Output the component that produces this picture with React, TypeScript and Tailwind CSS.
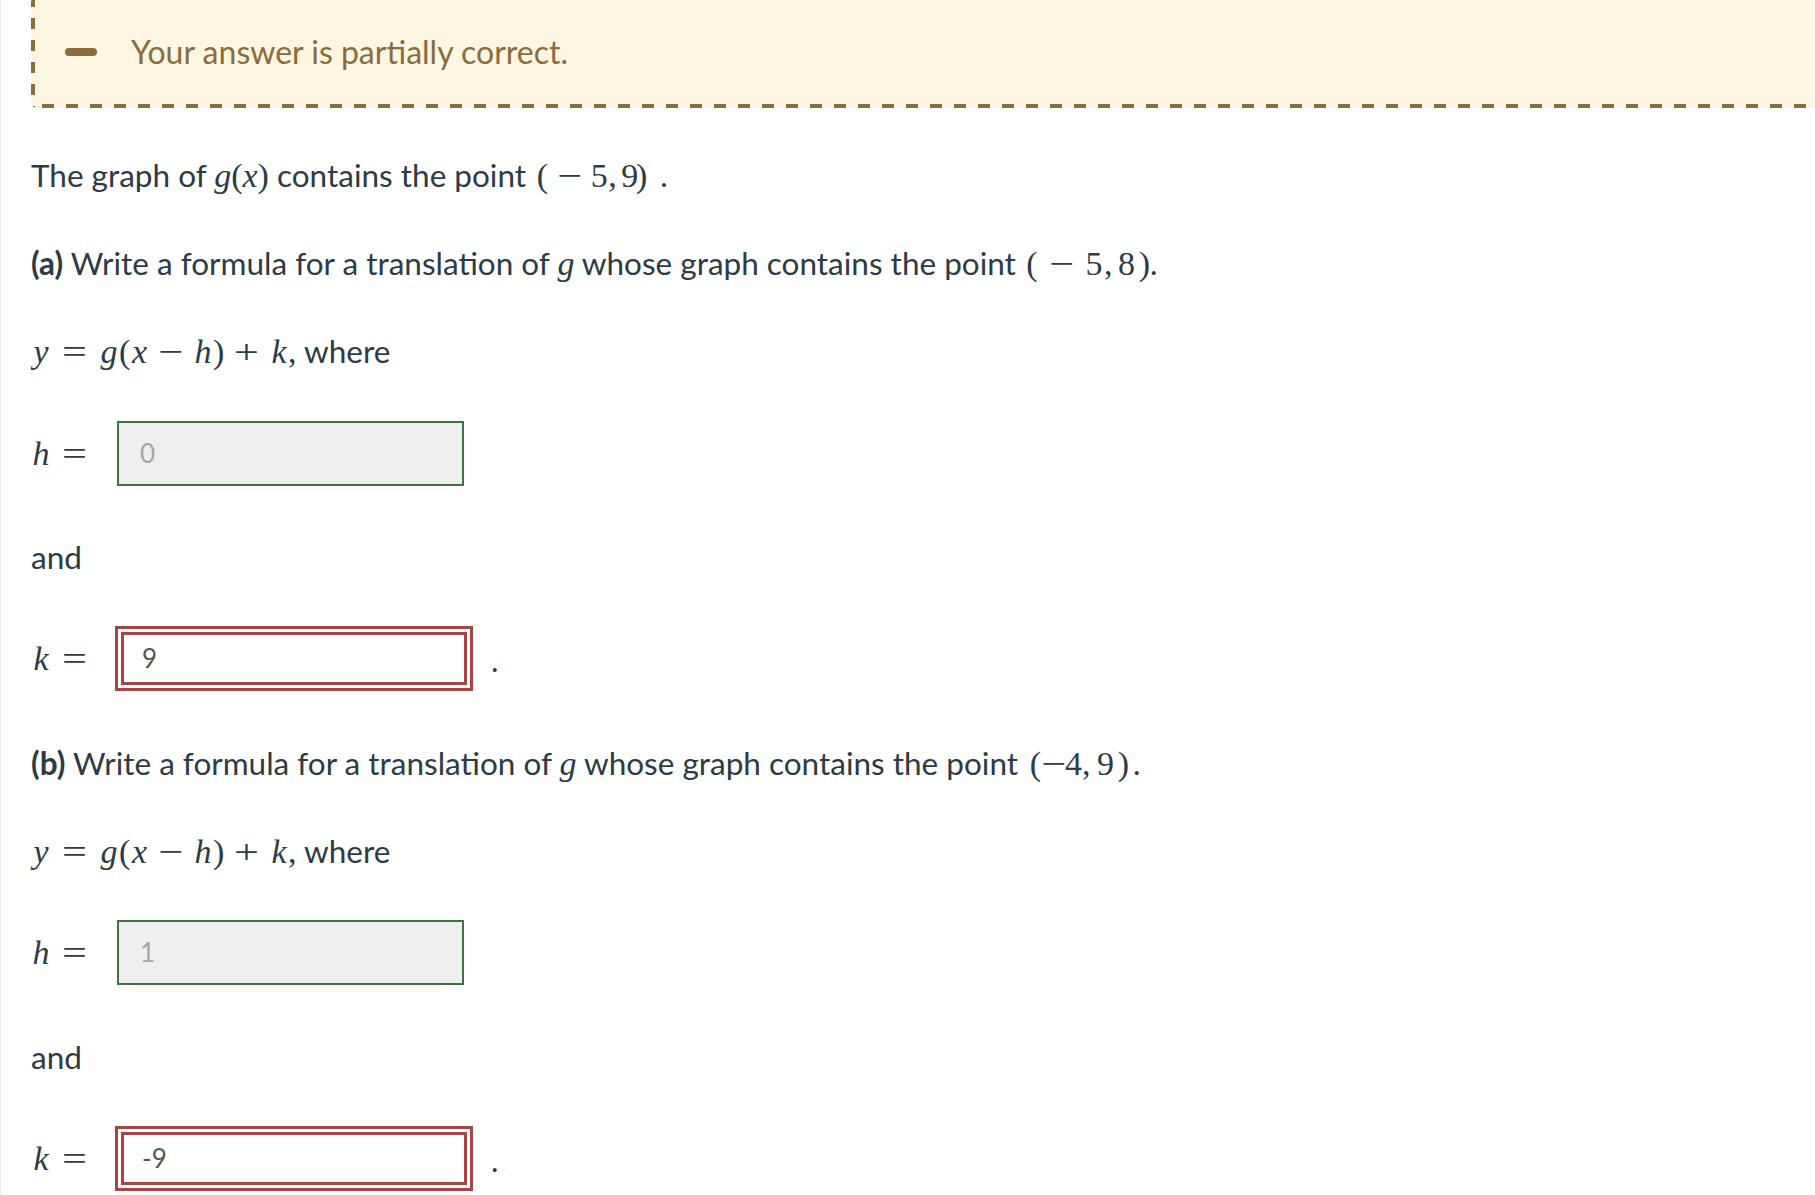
import React from 'react'

const serif = "font-['Liberation_Serif',_'Times_New_Roman',serif] text-[34px]"

const alignClass = { center: 'text-center', left: 'text-left', right: 'text-right' }

// one math glyph in a fixed-width cell, so spacing follows the typeset original
function G({
  w,
  it = false,
  op = false,
  align = 'center',
  children,
}: {
  w: string
  it?: boolean
  op?: boolean
  align?: 'center' | 'left' | 'right'
  children: React.ReactNode
}) {
  return (
    <span className={`inline-block ${alignClass[align]} ${w} ${serif} ${it ? 'italic' : ''}`}>
      {op ? <span className="inline-block scale-x-[1.3]">{children}</span> : children}
    </span>
  )
}

function M({ children, className = '' }: { children: React.ReactNode; className?: string }) {
  return <span className={`${serif} ${className}`}>{children}</span>
}

function Formula() {
  return (
    <div className="h-10 leading-10 flex items-baseline">
      <G w="w-[20px]" it>y</G>
      <G w="w-[48px]" op>=</G>
      <G w="w-[20px]" it>g</G>
      <G w="w-[11px]">(</G>
      <G w="w-[19px]" it>x</G>
      <G w="w-[44px]" op>−</G>
      <G w="w-[20px]" it>h</G>
      <G w="w-[11px]">)</G>
      <G w="w-[46px]" op>+</G>
      <G w="w-[18px]" it>k</G>
      <G w="w-[9px]" align="left">,</G>
      <span className="ml-[7px]">where</span>
    </div>
  )
}

function Label({ v }: { v: string }) {
  return (
    <div className="flex items-baseline">
      <G w="w-[20px]" it>{v}</G>
      <G w="w-[48px]" op>=</G>
    </div>
  )
}

function CorrectBox({ label, value }: { label: string; value: string }) {
  return (
    <div className="flex items-center h-[65px]">
      <div className="w-[86px]">
        <Label v={label} />
      </div>
      <div className="w-[347px] h-[65px] border-2 border-[#3c763d] bg-[#eeeeee] flex items-center pl-[21px] text-[26px] text-[#a6a6a6]">
        {value}
      </div>
    </div>
  )
}

function WrongBox({ label, value }: { label: string; value: string }) {
  return (
    <div className="flex items-center h-[65px]">
      <div className="w-[84px]">
        <Label v={label} />
      </div>
      <div className="w-[358px] h-[65px] border-[3px] border-[#a94442] p-[3px]">
        <div className="h-full border-[3px] border-[#a94442] bg-white flex items-center pl-[18px] text-[26px] text-[#555555]">
          {value}
        </div>
      </div>
      <span className="ml-[18px] mt-[4px]">.</span>
    </div>
  )
}

export default function App() {
  return (
    <div className="min-h-screen bg-white overflow-hidden border-l border-[#ececec] pl-[30px] font-['Lato',sans-serif] text-[31.5px] text-[#2d3b45]">
      <div className="-mt-1 -mr-10 h-[112px] rounded-md bg-[#fdf6e3] bg-[linear-gradient(to_right,#8a6d3b_50%,transparent_50%),linear-gradient(to_bottom,#8a6d3b_50%,transparent_50%)] [background-size:24px_4px,4px_22px] [background-position:11px_bottom,left_top] [background-repeat:repeat-x,repeat-y] flex items-center pl-[34px]">
        <div className="w-[32px] h-[8px] rounded-full bg-[#8a6d3b]" />
        <span className="ml-[34px] text-[32px] text-[#8a6d3b]">Your answer is partially correct.</span>
      </div>

      <p className="mt-[47px] h-10 leading-10 flex items-baseline whitespace-pre">
        <span>The graph of </span>
        <M className="italic">g</M>
        <M>(</M>
        <M className="italic">x</M>
        <M>)</M>
        <span> contains the point </span>
        <G w="w-[14px]" align="right">(</G>
        <G w="w-[42px]" op>−</G>
        <G w="w-[18px]">5</G>
        <G w="w-[13px]" align="left">,</G>
        <G w="w-[14px]">9</G>
        <G w="w-[13px]">)</G>
        <span className="ml-[12px]">.</span>
      </p>

      <p className="mt-12 h-10 leading-10 flex items-baseline whitespace-pre">
        <span className="font-bold">(a)</span>
        <span> Write a formula for a translation of </span>
        <M className="italic">g</M>
        <span> whose graph contains the point </span>
        <G w="w-[16px]">(</G>
        <G w="w-[44px]" op>−</G>
        <G w="w-[20px]">5</G>
        <G w="w-[13px]" align="left">,</G>
        <G w="w-[19px]">8</G>
        <G w="w-[14px]" align="right">)</G>
        <span>.</span>
      </p>

      <div className="mt-12">
        <Formula />
      </div>

      <div className="mt-[50px]">
        <CorrectBox label="h" value="0" />
      </div>

      <p className="mt-[51px] h-10 leading-10">and</p>

      <div className="mt-[49px]">
        <WrongBox label="k" value="9" />
      </div>

      <p className="mt-[52px] h-10 leading-10 flex items-baseline whitespace-pre">
        <span className="font-bold">(b)</span>
        <span> Write a formula for a translation of </span>
        <M className="italic">g</M>
        <span> whose graph contains the point </span>
        <G w="w-[15px]" align="right">(</G>
        <G w="w-[24px]" op>−</G>
        <G w="w-[17px]">4</G>
        <G w="w-[15px]" align="left">,</G>
        <G w="w-[17px]">9</G>
        <G w="w-[15px]" align="right">)</G>
        <span className="ml-[4px]">.</span>
      </p>

      <div className="mt-12">
        <Formula />
      </div>

      <div className="mt-[49px]">
        <CorrectBox label="h" value="1" />
      </div>

      <p className="mt-[52px] h-10 leading-10">and</p>

      <div className="mt-[49px]">
        <WrongBox label="k" value="-9" />
      </div>
    </div>
  )
}
